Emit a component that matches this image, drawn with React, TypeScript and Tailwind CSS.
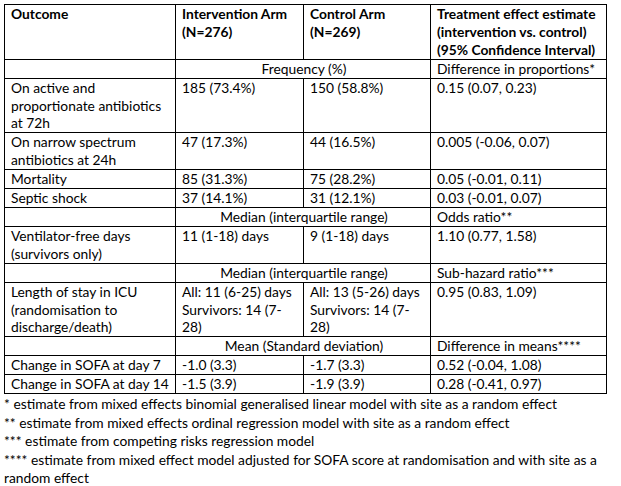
import type { ReactNode } from 'react'

type Row =
  | { kind: 'data'; cells: [ReactNode, ReactNode, ReactNode, ReactNode] }
  | { kind: 'group'; label: string; effect: string }

const rows: Row[] = [
  { kind: 'group', label: 'Frequency (%)', effect: 'Difference in proportions*' },
  {
    kind: 'data',
    cells: [
      <>On active and<br />proportionate antibiotics<br />at 72h</>,
      '185 (73.4%)',
      '150 (58.8%)',
      '0.15 (0.07, 0.23)',
    ],
  },
  {
    kind: 'data',
    cells: [<>On narrow spectrum<br />antibiotics at 24h</>, '47 (17.3%)', '44 (16.5%)', '0.005 (-0.06, 0.07)'],
  },
  { kind: 'data', cells: ['Mortality', '85 (31.3%)', '75 (28.2%)', '0.05 (-0.01, 0.11)'] },
  { kind: 'data', cells: ['Septic shock', '37 (14.1%)', '31 (12.1%)', '0.03 (-0.01, 0.07)'] },
  { kind: 'group', label: 'Median (interquartile range)', effect: 'Odds ratio**' },
  {
    kind: 'data',
    cells: [<>Ventilator-free days<br />(survivors only)</>, '11 (1-18) days', '9 (1-18) days', '1.10 (0.77, 1.58)'],
  },
  { kind: 'group', label: 'Median (interquartile range)', effect: 'Sub-hazard ratio***' },
  {
    kind: 'data',
    cells: [
      <>Length of stay in ICU<br />(randomisation to<br />discharge/death)</>,
      <>All: 11 (6-25) days<br />Survivors: 14 (7-<br />28)</>,
      <>All: 13 (5-26) days<br />Survivors: 14 (7-<br />28)</>,
      '0.95 (0.83, 1.09)',
    ],
  },
  { kind: 'group', label: 'Mean (Standard deviation)', effect: 'Difference in means****' },
  { kind: 'data', cells: ['Change in SOFA at day 7', '-1.0 (3.3)', '-1.7 (3.3)', '0.52 (-0.04, 1.08)'] },
  { kind: 'data', cells: ['Change in SOFA at day 14', '-1.5 (3.9)', '-1.9 (3.9)', '0.28 (-0.41, 0.97)'] },
]

const cell = 'border border-black align-top pl-[6px] pr-1 py-0 whitespace-nowrap overflow-hidden'

export default function App() {
  return (
    <div
      className="w-[621px] h-[486px] bg-white text-black pl-[4px] pt-[4px] text-[13.8px] leading-[17.9px]"
      style={{ fontFamily: 'Lato, "Open Sans", sans-serif' }}
    >
      <table className="border-collapse table-fixed w-[602px]">
        <colgroup>
          <col className="w-[171px]" />
          <col className="w-[128px]" />
          <col className="w-[127px]" />
          <col className="w-[176px]" />
        </colgroup>
        <thead>
          <tr className="font-bold">
            <td className={cell}>Outcome</td>
            <td className={cell}>
              Intervention Arm
              <br />
              (N=276)
            </td>
            <td className={cell}>
              Control Arm
              <br />
              (N=269)
            </td>
            <td className={cell}>
              Treatment effect estimate
              <br />
              (intervention vs. control)
              <br />
              (95% Confidence Interval)
            </td>
          </tr>
        </thead>
        <tbody>
          {rows.map((r, i) =>
            r.kind === 'group' ? (
              <tr key={i}>
                <td className={cell}>&nbsp;</td>
                <td colSpan={2} className={`${cell} text-center`}>
                  {r.label}
                </td>
                <td className={cell}>{r.effect}</td>
              </tr>
            ) : (
              <tr key={i}>
                {r.cells.map((c, j) => (
                  <td key={j} className={cell}>
                    {c}
                  </td>
                ))}
              </tr>
            )
          )}
        </tbody>
      </table>
      <div className="leading-[18.5px] pt-[1px] whitespace-nowrap">
        <p>* estimate from mixed effects binomial generalised linear model with site as a random effect</p>
        <p>** estimate from mixed effects ordinal regression model with site as a random effect</p>
        <p>*** estimate from competing risks regression model</p>
        <p>
          **** estimate from mixed effect model adjusted for SOFA score at randomisation and with site as a
          <br />
          random effect
        </p>
      </div>
    </div>
  )
}
